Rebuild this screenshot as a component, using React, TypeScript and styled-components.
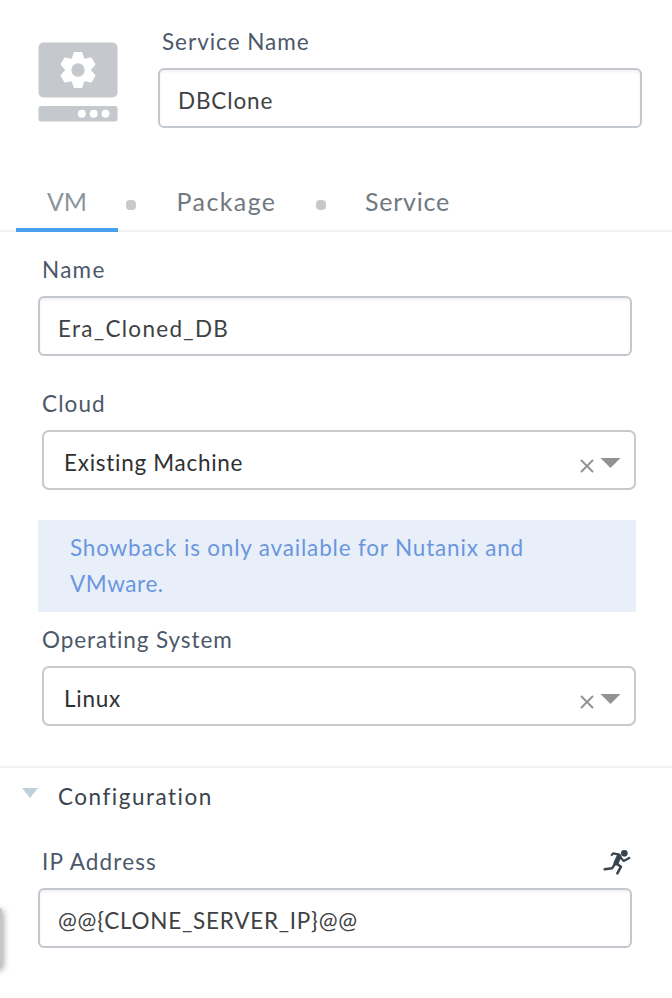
import React from 'react';
import styled, { createGlobalStyle } from 'styled-components';

const GlobalStyle = createGlobalStyle`
  *, *::before, *::after { box-sizing: border-box; }
  body { margin: 0; background: #fff; }
`;

const Panel = styled.main`
  position: relative;
  width: 672px;
  height: 998px;
  overflow: hidden;
  background: #fff;
  font-family: Lato, 'Open Sans', sans-serif;
  font-size: 22.5px;
  color: #404142;
`;

const Header = styled.header`
  display: flex;
  height: 172px;
  padding: 27px 30px 0 38px;
`;

const ServiceIcon = styled.svg`
  flex: none;
  width: 80px;
  height: 80px;
  margin: 15px 40px 0 0;
`;

const Field = styled.div`
  flex: 1;
  min-width: 0;
`;

const Text = styled.span<{ $track: number }>`
  letter-spacing: ${(p) => p.$track}px;
  white-space: nowrap;
`;

const Label = styled.div`
  display: flex;
  justify-content: space-between;
  height: 30px;
  margin: 0 0 11px 4px;
  line-height: 30px;
  color: #4c5869;
`;

const InputBox = styled.div`
  display: flex;
  align-items: center;
  height: 60px;
  padding: 4px 18px 0;
  border: 2px solid #c3c8ce;
  border-radius: 6px;
  box-shadow: inset 0 2px 3px rgba(0, 0, 0, 0.06);
`;

const SelectBox = styled.div`
  display: flex;
  align-items: center;
  justify-content: space-between;
  height: 60px;
  margin-left: 4px;
  padding: 4px 13px 0 20px;
  border: 2px solid #c9c9c9;
  border-radius: 7px;
  color: #2f3031;
`;

const SelectActions = styled.svg`
  width: 42px;
  height: 20px;
  margin-top: 3px;
`;

const Tabs = styled.nav`
  display: flex;
  align-items: stretch;
  height: 60px;
  padding-left: 16px;
  border-bottom: 2px solid #f1f2f3;
  font-size: 25px;
  line-height: 58px;
  color: #717980;
`;

const Tab = styled.div<{ $width: number; $active?: boolean }>`
  flex: none;
  width: ${(p) => p.$width}px;
  height: 60px;
  border-bottom: ${(p) => (p.$active ? '4px solid #4aa0ee' : '0')};
  color: ${(p) => (p.$active ? '#8a959c' : 'inherit')};
  text-align: center;
`;

const Dot = styled.i<{ $before: number; $after: number }>`
  flex: none;
  width: 10px;
  height: 10px;
  margin: 28px ${(p) => p.$after}px 0 ${(p) => p.$before}px;
  border-radius: 4px;
  background: #c9c9c9;
`;

const VmForm = styled.section`
  height: 536px;
  padding: 23px 36px 0 38px;
  border-bottom: 2px solid #f1f2f3;
`;

const NameField = styled.div`
  height: 134px;
  padding-right: 4px;
`;

const CloudField = styled.div`
  height: 131px;
`;

const Notice = styled.div`
  height: 92px;
  margin-bottom: 13px;
  padding: 10px 32px;
  background: #e9eff9;
  color: #6996df;
  line-height: 36px;
`;

const ConfigHeader = styled.div`
  display: flex;
  height: 79px;
  padding: 12px 0 0 22px;
  line-height: 33px;
  color: #39444e;
`;

const Caret = styled.svg`
  width: 16px;
  height: 10px;
  margin: 8px 20px 0 0;
`;

const AddressField = styled.div`
  padding: 0 40px 0 38px;
`;

const RunIcon = styled.svg`
  width: 28px;
  height: 28px;
  margin: 1px 1px 0 0;
`;

const EdgeHandle = styled.div`
  position: absolute;
  left: -18px;
  top: 908px;
  width: 20px;
  height: 60px;
  border-radius: 3px;
  background: #c6c6c6;
  box-shadow: 1px 2px 7px rgba(0, 0, 0, 0.4);
`;

const Select = ({ value, track }: { value: string; track: number }) => (
  <SelectBox>
    <Text $track={track}>{value}</Text>
    <SelectActions viewBox="0 0 42 20">
      <path d="M2.5 6.5l11 11M13.5 6.5l-11 11" stroke="#929292" strokeWidth="1.9" strokeLinecap="round" />
      <path d="M21.5 4h20l-10 10z" fill="#929292" />
    </SelectActions>
  </SelectBox>
);

const teeth = [0, 60, 120, 180, 240, 300];

export default function App() {
  return (
    <Panel>
      <GlobalStyle />
      <Header>
        <ServiceIcon viewBox="0 0 80 80">
          <rect x=".5" y=".5" width="79" height="55" rx="5" fill="#c5c8cd" />
          <rect x=".5" y="64" width="79" height="15.5" rx="2.5" fill="#c5c8cd" />
          <g transform="translate(40 28)" fill="#fff">
            {teeth.map((a) => (
              <path key={a} transform={`rotate(${a})`} d="M-6.5-10.5L-4.6-16.8Q-4.3-18-3.2-18H3.2Q4.3-18 4.6-16.8L6.5-10.5z" />
            ))}
            <circle r="13" />
            <circle r="6.7" fill="#c5c8cd" />
          </g>
          <circle cx="43.8" cy="71.8" r="4" fill="#fff" />
          <circle cx="55.7" cy="71.8" r="4" fill="#fff" />
          <circle cx="67.5" cy="71.8" r="4" fill="#fff" />
        </ServiceIcon>
        <Field>
          <Label><Text $track={0.98}>Service Name</Text></Label>
          <InputBox><Text $track={0.85}>DBClone</Text></InputBox>
        </Field>
      </Header>

      <Tabs>
        <Tab $width={102} $active><Text $track={0}>VM</Text></Tab>
        <Dot $before={8} $after={32} />
        <Tab $width={117}><Text $track={1.4}>Package</Text></Tab>
        <Dot $before={31} $after={26} />
        <Tab $width={111}><Text $track={0.75}>Service</Text></Tab>
      </Tabs>

      <VmForm>
        <NameField>
          <Label><Text $track={1.3}>Name</Text></Label>
          <InputBox><Text $track={1.3}>Era_Cloned_DB</Text></InputBox>
        </NameField>
        <CloudField>
          <Label><Text $track={1.1}>Cloud</Text></Label>
          <Select value="Existing Machine" track={0.72} />
        </CloudField>
        <Notice>
          <Text $track={0.82}>Showback is only available for Nutanix and</Text>
          <br />
          <Text $track={0.6}>VMware.</Text>
        </Notice>
        <Label><Text $track={0.92}>Operating System</Text></Label>
        <Select value="Linux" track={0.75} />
      </VmForm>

      <ConfigHeader>
        <Caret viewBox="0 0 16 10"><path d="M0 0h16L8 10z" fill="#bdd1d8" /></Caret>
        <Text $track={1.5}>Configuration</Text>
      </ConfigHeader>
      <AddressField>
        <Label>
          <Text $track={1.15}>IP Address</Text>
          <RunIcon viewBox="70 40 84 84" fill="none" stroke="#39444e" strokeLinecap="round" strokeLinejoin="round">
            <circle cx="134" cy="56" r="10" fill="#39444e" stroke="none" />
            <path d="M96 61l5-5 18 4" strokeWidth="6.5" />
            <path d="M118 66l-9 19" strokeWidth="15" />
            <path d="M120 65l12 14 17-9" strokeWidth="6.5" />
            <path d="M109 86l15 10-11 20" strokeWidth="7.5" />
            <path d="M105 89l-8 12-22 3" strokeWidth="7.5" />
          </RunIcon>
        </Label>
        <InputBox><Text $track={0.75}>{'@@{CLONE_SERVER_IP}@@'}</Text></InputBox>
      </AddressField>
      <EdgeHandle />
    </Panel>
  );
}
